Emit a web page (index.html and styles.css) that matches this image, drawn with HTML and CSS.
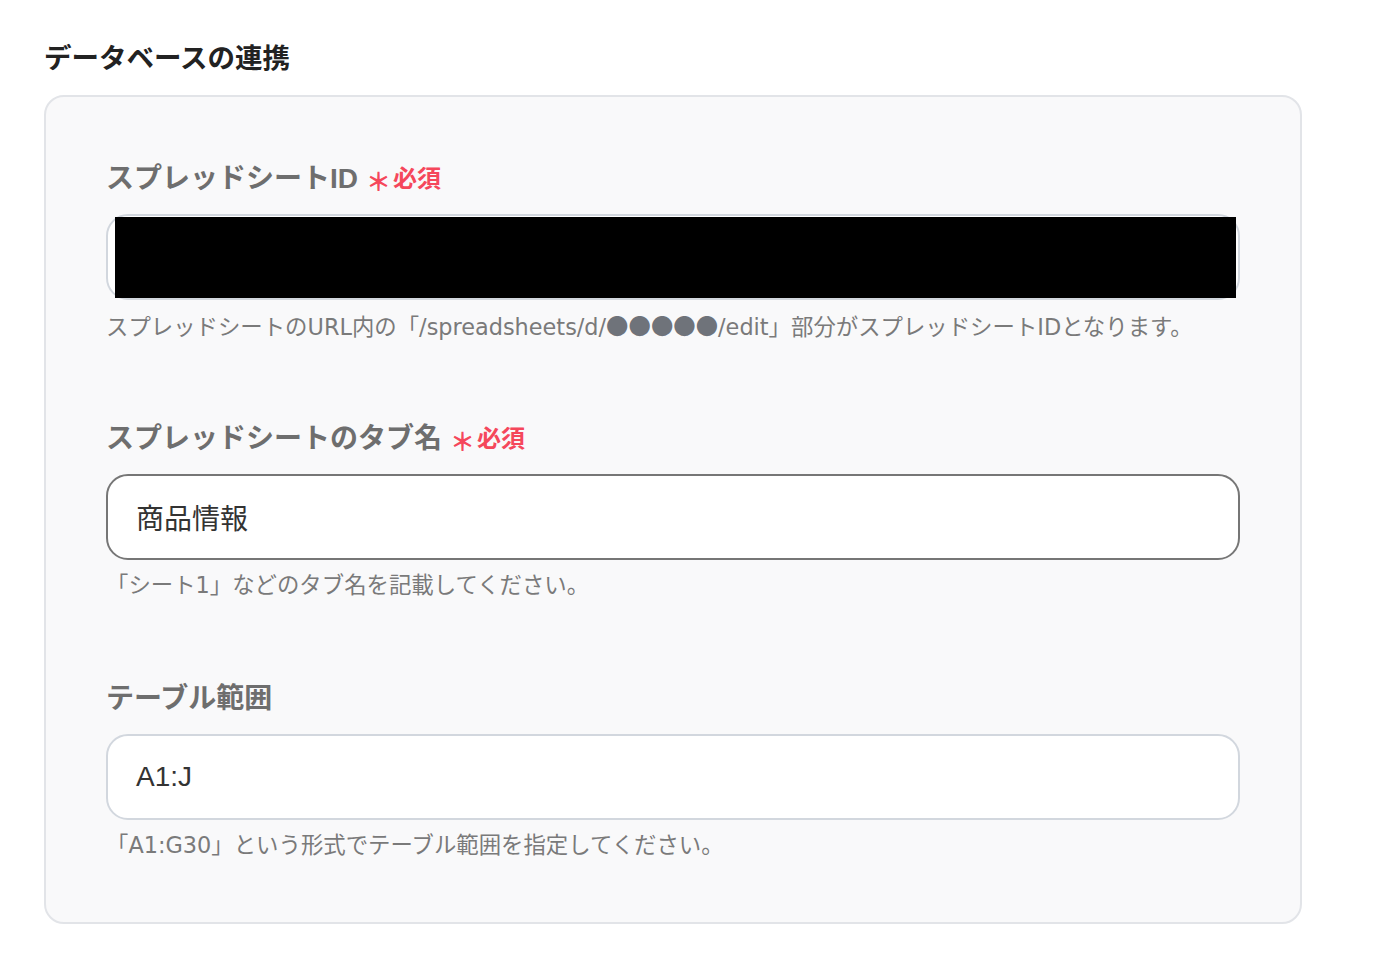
FILE: index.html
```html
<!DOCTYPE html>
<html lang="ja">
<head>
    <meta charset="UTF-8">
    <meta name="viewport" content="width=device-width, initial-scale=1.0">
    <title>データベースの連携</title>
    <link rel="stylesheet" href="styles.css">
</head>
<body>
    <div class="section">
        <h2 class="section-title">データベースの連携</h2>
        <div class="card">
            <div class="field">
                <div class="field-label">スプレッドシートID<span class="required"><span class="mark">＊</span>必須</span></div>
                <div class="text-box redacted-box"><span class="redacted"></span></div>
                <div class="field-help">スプレッドシートのURL内の「/spreadsheets/d/<span class="dots">●●●●●</span>/edit」部分がスプレッドシートIDとなります。</div>
            </div>
            <div class="field">
                <div class="field-label">スプレッドシートのタブ名<span class="required"><span class="mark">＊</span>必須</span></div>
                <div class="text-box active">商品情報</div>
                <div class="field-help">「シート1」などのタブ名を記載してください。</div>
            </div>
            <div class="field">
                <div class="field-label">テーブル範囲</div>
                <div class="text-box">A1:J</div>
                <div class="field-help">「A1:G30」という形式でテーブル範囲を指定してください。</div>
            </div>
        </div>
    </div>
</body>
</html>
```

FILE: styles.css
```css
body {
    margin: 0;
    background: #ffffff;
    font-family: "Liberation Sans", "Noto Sans CJK JP", sans-serif;
    color: #222222;
}
.section {
    width: 1258px;
    padding: 41px 0 0 44px;
}
.section-title {
    margin: 0 0 18px 0;
    height: 36px;
    font-size: 27.5px;
    line-height: 36px;
    font-weight: 700;
    color: #222222;
}
.card {
    background: #f9f9fa;
    border: 2px solid #e2e4e8;
    border-radius: 20px;
    padding: 60px;
    display: flex;
    flex-direction: column;
    gap: 75px;
}
.field-label {
    height: 40px;
    box-sizing: border-box;
    padding-top: 4px;
    font-size: 28px;
    line-height: 36px;
    font-weight: 700;
    color: #6e6e6e;
    display: flex;
    align-items: center;
}
.required {
    color: #f5475b;
    font-size: 24px;
    margin-left: 8px;
    display: flex;
    align-items: center;
}
.required .mark {
    font-size: 25px;
    margin-right: 2px;
    position: relative;
    top: 3px;
}
.text-box {
    margin-top: 17px;
    height: 86px;
    box-sizing: border-box;
    background: #ffffff;
    border: 2px solid #d2d7de;
    border-radius: 22px;
    padding: 0 28px;
    display: flex;
    align-items: center;
    font-size: 28px;
    color: #333333;
}
.text-box.active {
    border-color: #767676;
}
.redacted-box {
    padding: 1px 2px 0 7px;
    align-items: stretch;
}
.redacted {
    flex: 1;
    background: #000000;
}
.field-help {
    margin-top: 12px;
    height: 30px;
    font-family: "DejaVu Sans", "Noto Sans CJK JP", sans-serif;
    font-size: 22.4px;
    line-height: 26px;
    color: #7a7a7a;
}
.dots {
    font-family: "Noto Sans CJK JP", sans-serif;
    color: #6f737a;
}
```
